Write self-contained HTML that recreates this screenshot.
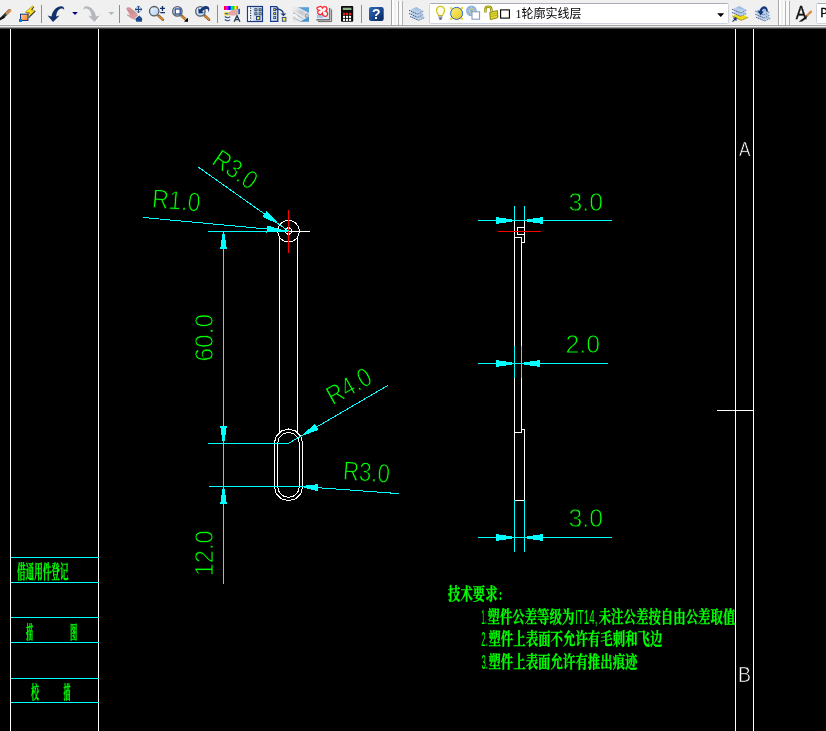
<!DOCTYPE html>
<html><head><meta charset="utf-8"><title>CAD</title>
<style>
html,body{margin:0;padding:0;background:#000;}
body{width:826px;height:731px;overflow:hidden;position:relative;font-family:"Liberation Sans","Noto Sans CJK SC",sans-serif;}
svg.cad{position:absolute;left:0;top:0;}
svg{filter:brightness(1);}
.dt{font-family:"Liberation Sans",sans-serif;fill:#00ff00;stroke:#000;stroke-width:0.8px;paint-order:fill stroke;}
.lt{font-family:"Liberation Sans",sans-serif;fill:#00ff00;}
.wt{font-family:"Liberation Sans",sans-serif;fill:#fff;stroke:#000;stroke-width:0.6px;paint-order:fill stroke;}
.cn{font-family:"Liberation Serif","Noto Serif CJK SC",serif;font-weight:bold;fill:#00ff00;stroke:#00ff00;stroke-width:0.3px;}
#tb{position:absolute;left:0;top:0;width:826px;height:29px;}
</style></head><body>
<svg class="cad" width="826" height="731" viewBox="0 0 826 731">
<g shape-rendering="crispEdges" stroke-width="1" fill="none">
<line x1="10.5" y1="28" x2="10.5" y2="731" stroke="#ffffff" />
<line x1="98.5" y1="28" x2="98.5" y2="731" stroke="#ffffff" />
<line x1="735.5" y1="28" x2="735.5" y2="731" stroke="#ffffff" />
<line x1="753.5" y1="28" x2="753.5" y2="731" stroke="#ffffff" />
<line x1="717" y1="410.5" x2="753" y2="410.5" stroke="#ffffff" />
<line x1="10.5" y1="557.5" x2="98.5" y2="557.5" stroke="#00ffff" />
<line x1="10.5" y1="582.5" x2="98.5" y2="582.5" stroke="#00ffff" />
<line x1="10.5" y1="617.5" x2="98.5" y2="617.5" stroke="#00ffff" />
<line x1="10.5" y1="642.5" x2="98.5" y2="642.5" stroke="#00ffff" />
<line x1="10.5" y1="678.5" x2="98.5" y2="678.5" stroke="#00ffff" />
<line x1="10.5" y1="702.5" x2="98.5" y2="702.5" stroke="#00ffff" />
<line x1="279.5" y1="237" x2="279.5" y2="432.5" stroke="#ffffff" />
<line x1="297.5" y1="237" x2="297.5" y2="432.5" stroke="#ffffff" />
<polygon fill="none" stroke="#fff" points="299.4,231.2 298.6,235.4 296.2,238.9 292.7,241.3 288.5,242.1 284.3,241.3 280.8,238.9 278.4,235.4 277.6,231.2 278.4,227.0 280.8,223.5 284.3,221.1 288.5,220.3 292.7,221.1 296.2,223.5 298.6,227.0"/>
<polygon fill="none" stroke="#fff" points="291.9,231.0 290.9,233.4 288.5,234.4 286.1,233.4 285.1,231.0 286.1,228.6 288.5,227.6 290.9,228.6"/>
<polygon fill="none" stroke="#fff" points="274.3,443.2 276.2,436.1 281.4,430.9 288.5,429.0 295.6,430.9 300.8,436.1 302.7,443.2 302.7,486.5 300.8,493.6 295.6,498.8 288.5,500.7 281.4,498.8 276.2,493.6 274.3,486.5"/>
<polygon fill="none" stroke="#fff" points="277.7,443.2 279.1,437.8 283.1,433.8 288.5,432.4 293.9,433.8 297.9,437.8 299.3,443.2 299.3,486.5 297.9,491.9 293.9,495.9 288.5,497.3 283.1,495.9 279.1,491.9 277.7,486.5"/>
<line x1="288.5" y1="231.5" x2="310" y2="231.5" stroke="#ffffff" />
<line x1="208" y1="231.5" x2="288.5" y2="231.5" stroke="#00ffff" />
<line x1="288.5" y1="210" x2="288.5" y2="253" stroke="#ff0000" />
<line x1="208" y1="443.5" x2="289" y2="443.5" stroke="#00ffff" />
<line x1="209" y1="486.5" x2="300" y2="486.5" stroke="#00ffff" />
<line x1="223.5" y1="231" x2="223.5" y2="584" stroke="#00ffff" />
<line x1="198.3" y1="167.1" x2="288.5" y2="231" stroke="#00ffff" />
<line x1="143.3" y1="217.5" x2="288.5" y2="231" stroke="#00ffff" />
<line x1="388.1" y1="385.3" x2="288.5" y2="443.4" stroke="#00ffff" />
<line x1="398.6" y1="493.6" x2="299.3" y2="486.3" stroke="#00ffff" />
<path stroke="#fff" d="M514.5 221V500.5H524.5V429.5H521.5 M524.5 221V242.5H521.5 M521.5 237.5V432.5H514.5 M514.5 237.5H521.5 M517.5 227.5H524.5V234.5H517.5Z"/>
<line x1="498" y1="231.5" x2="541" y2="231.5" stroke="#ff0000" />
<line x1="478" y1="220.5" x2="612" y2="220.5" stroke="#00ffff" />
<line x1="514.5" y1="206" x2="514.5" y2="221" stroke="#00ffff" />
<line x1="524.5" y1="206" x2="524.5" y2="221" stroke="#00ffff" />
<line x1="478" y1="363.5" x2="608" y2="363.5" stroke="#00ffff" />
<line x1="514.5" y1="346" x2="514.5" y2="378" stroke="#00ffff" />
<line x1="521.5" y1="346" x2="521.5" y2="378" stroke="#00ffff" />
<line x1="478" y1="537.5" x2="612" y2="537.5" stroke="#00ffff" />
<line x1="514.5" y1="500" x2="514.5" y2="552" stroke="#00ffff" />
<line x1="524.5" y1="500" x2="524.5" y2="552" stroke="#00ffff" />
</g>
<g shape-rendering="crispEdges">
<rect x="222" y="234" width="3" height="6" fill="#00ffff"/><rect x="221" y="240" width="5" height="7" fill="#00ffff"/><rect x="220" y="247" width="7" height="2" fill="#00ffff"/>
<rect x="222" y="435" width="3" height="6" fill="#00ffff"/><rect x="221" y="428" width="5" height="7" fill="#00ffff"/><rect x="220" y="426" width="7" height="2" fill="#00ffff"/>
<rect x="222" y="489" width="3" height="6" fill="#00ffff"/><rect x="221" y="495" width="5" height="7" fill="#00ffff"/><rect x="220" y="502" width="7" height="2" fill="#00ffff"/>
<polygon points="279.6,224.7 266.6,211.1 262.4,216.9" fill="#00ffff"/>
<polygon points="285.1,230.7 267.0,225.4 266.4,232.6" fill="#00ffff"/>
<polygon points="300.8,436.2 318.6,430.0 314.9,423.8" fill="#00ffff"/>
<polygon points="299.3,486.3 317.5,491.2 318.0,484.1" fill="#00ffff"/>
<rect x="506" y="219" width="6" height="3" fill="#00ffff"/><rect x="499" y="218" width="7" height="5" fill="#00ffff"/><rect x="496" y="217" width="3" height="7" fill="#00ffff"/>
<rect x="527" y="219" width="6" height="3" fill="#00ffff"/><rect x="533" y="218" width="7" height="5" fill="#00ffff"/><rect x="540" y="217" width="3" height="7" fill="#00ffff"/>
<rect x="506" y="362" width="6" height="3" fill="#00ffff"/><rect x="499" y="361" width="7" height="5" fill="#00ffff"/><rect x="496" y="360" width="3" height="7" fill="#00ffff"/>
<rect x="524" y="362" width="6" height="3" fill="#00ffff"/><rect x="530" y="361" width="7" height="5" fill="#00ffff"/><rect x="537" y="360" width="3" height="7" fill="#00ffff"/>
<rect x="506" y="536" width="6" height="3" fill="#00ffff"/><rect x="499" y="535" width="7" height="5" fill="#00ffff"/><rect x="496" y="534" width="3" height="7" fill="#00ffff"/>
<rect x="527" y="536" width="6" height="3" fill="#00ffff"/><rect x="533" y="535" width="7" height="5" fill="#00ffff"/><rect x="540" y="534" width="3" height="7" fill="#00ffff"/>
</g>
<text class="dt" transform="translate(210.5,163.3) rotate(34.6)" font-size="26.5" textLength="48" lengthAdjust="spacingAndGlyphs">R3.0</text>
<text class="dt" transform="translate(151.5,207.3) rotate(5)" font-size="26.5" textLength="48.5" lengthAdjust="spacingAndGlyphs">R1.0</text>
<text class="dt" transform="translate(213.4,361.5) rotate(-90)" font-size="26.5" textLength="47.5" lengthAdjust="spacingAndGlyphs">60.0</text>
<text class="dt" transform="translate(213.4,576.3) rotate(-90)" font-size="26.5" textLength="46" lengthAdjust="spacingAndGlyphs">12.0</text>
<text class="dt" transform="translate(332.5,405.5) rotate(-29)" font-size="26.5" textLength="47.5" lengthAdjust="spacingAndGlyphs">R4.0</text>
<text class="dt" transform="translate(342.5,479.5) rotate(4)" font-size="26.5" textLength="47" lengthAdjust="spacingAndGlyphs">R3.0</text>
<text class="dt" transform="translate(568.5,210.9) rotate(0)" font-size="26.5" textLength="34.5" lengthAdjust="spacingAndGlyphs">3.0</text>
<text class="dt" transform="translate(565.5,353) rotate(0)" font-size="26.5" textLength="34.5" lengthAdjust="spacingAndGlyphs">2.0</text>
<text class="dt" transform="translate(568.5,527.2) rotate(0)" font-size="26.5" textLength="34.5" lengthAdjust="spacingAndGlyphs">3.0</text>
<text class="wt" x="739" y="156" font-size="20.5" textLength="11.5" lengthAdjust="spacingAndGlyphs">A</text>
<text class="wt" x="738" y="682" font-size="22.5" textLength="13" lengthAdjust="spacingAndGlyphs">B</text>
<text class="cn" x="17" y="578.7" font-size="19.3" textLength="51.5" lengthAdjust="spacingAndGlyphs">借通用件登记</text>
<text class="cn" x="26" y="638.5" font-size="18.5" textLength="7" lengthAdjust="spacingAndGlyphs">描</text>
<text class="cn" x="70" y="638.5" font-size="18.5" textLength="7.3" lengthAdjust="spacingAndGlyphs">图</text>
<text class="cn" x="31" y="699" font-size="18.5" textLength="8" lengthAdjust="spacingAndGlyphs">校</text>
<text class="cn" x="63.5" y="699" font-size="18.5" textLength="7" lengthAdjust="spacingAndGlyphs">描</text>
<text class="cn" x="448" y="600" font-size="16.5" textLength="49.5" lengthAdjust="spacingAndGlyphs">技术要求</text>
<text class="cn" x="499" y="600" font-size="16.5" textLength="3" lengthAdjust="spacingAndGlyphs">:</text>
<text class="lt" x="481.3" y="623.5" font-size="19.5" textLength="5.5" lengthAdjust="spacingAndGlyphs">1.</text>
<text class="cn" x="487.5" y="622.5" font-size="16.5" textLength="86.79" lengthAdjust="spacingAndGlyphs">塑件公差等级为</text>
<text class="lt" x="575" y="623.5" font-size="19.5" textLength="22.5" lengthAdjust="spacingAndGlyphs">IT14,</text>
<text class="cn" x="598.7" y="622.5" font-size="16.5" textLength="136.67000000000002" lengthAdjust="spacingAndGlyphs">未注公差按自由公差取值</text>
<text class="lt" x="481.3" y="646" font-size="19.5" textLength="6.5" lengthAdjust="spacingAndGlyphs">2.</text>
<text class="cn" x="488.4" y="645" font-size="16.5" textLength="174.08" lengthAdjust="spacingAndGlyphs">塑件上表面不允许有毛刺和飞边</text>
<text class="lt" x="481.5" y="669" font-size="19.5" textLength="6.5" lengthAdjust="spacingAndGlyphs">3.</text>
<text class="cn" x="488.4" y="668" font-size="16.5" textLength="149.14000000000001" lengthAdjust="spacingAndGlyphs">塑件上表面允许有推出痕迹</text>
</svg>
<svg id="tb" width="826" height="29" viewBox="0 0 826 29">
<defs>
<linearGradient id="gOr" x1="0" y1="0" x2="1" y2="1"><stop offset="0" stop-color="#ffd0a8"/><stop offset="1" stop-color="#ff7a1a"/></linearGradient>
<linearGradient id="gLens" x1="0" y1="0" x2="1" y2="1"><stop offset="0" stop-color="#f4f9ff"/><stop offset="1" stop-color="#a9cdee"/></linearGradient>
<linearGradient id="gHelp" x1="0" y1="0" x2="1" y2="1"><stop offset="0" stop-color="#2f6cc0"/><stop offset="1" stop-color="#08245a"/></linearGradient>
<linearGradient id="gSheet" x1="0" y1="0" x2="1" y2="0"><stop offset="0" stop-color="#ffffff"/><stop offset="1" stop-color="#7fa9db"/></linearGradient>
<linearGradient id="gSh2" x1="0" y1="1" x2="0.6" y2="0"><stop offset="0" stop-color="#e4eefa"/><stop offset="1" stop-color="#8fb2dc"/></linearGradient>
<linearGradient id="gSun" x1="0" y1="0" x2="1" y2="1"><stop offset="0" stop-color="#fbf07a"/><stop offset="1" stop-color="#e6c81e"/></linearGradient>
<linearGradient id="gRain" x1="0" y1="0" x2="1" y2="0"><stop offset="0" stop-color="#ff0000"/><stop offset="0.2" stop-color="#ff00ff"/><stop offset="0.4" stop-color="#0000ff"/><stop offset="0.55" stop-color="#00e0e0"/><stop offset="0.68" stop-color="#00e000"/><stop offset="0.82" stop-color="#ffff00"/><stop offset="1" stop-color="#ff3000"/></linearGradient>
<linearGradient id="gRoll" x1="0" y1="0" x2="1" y2="1"><stop offset="0" stop-color="#f4f4f4"/><stop offset="0.5" stop-color="#c4c8cc"/><stop offset="1" stop-color="#e8ecf0"/></linearGradient>
<g id="lens"><circle r="4.7" fill="url(#gLens)" stroke="#555b66" stroke-width="1.3"/></g>
<g id="handle"><line x1="0" y1="0" x2="4.2" y2="3.8" stroke="#7a4a18" stroke-width="2.6" stroke-linecap="round"/><line x1="0.2" y1="0.2" x2="4" y2="3.6" stroke="#e09038" stroke-width="1.5" stroke-linecap="round"/></g>
<g id="sheet"><polygon points="0,-3.2 7.4,0 0,3.2 -7.4,0" /></g>
<g id="sh2"><polygon points="-7.4,0 -0.3,-3.3 7.3,0.9 1.1,3.6" stroke="none"/><path d="M-7.4 0 L1.1 3.6" stroke="#2c4470" stroke-width="1" stroke-dasharray="1.3 0.9" fill="none"/><path d="M1.1 3.6 L7.3 0.9" stroke="#5c7698" stroke-width="0.9" stroke-dasharray="1.3 0.9" fill="none"/></g>
</defs>
<!-- background -->
<rect x="0" y="0" width="826" height="29" fill="#f0f0f0"/>
<rect x="0" y="24" width="826" height="1" fill="#f8f8f8"/>
<rect x="0" y="25" width="826" height="1" fill="#a6a6a6"/>
<rect x="0" y="26" width="826" height="1" fill="#ececec"/>
<rect x="0" y="27" width="826" height="1" fill="#9c9c9c"/>
<rect x="0" y="28" width="826" height="1" fill="#444"/>
<!-- toolbar ends & grippers -->
<rect x="392" y="0" width="2" height="25" fill="#ffffff"/><rect x="396" y="1" width="2" height="24" fill="#fcfcfc"/>
<rect x="391" y="0" width="1" height="26" fill="#a8a8a8"/>
<rect x="398" y="1" width="1" height="24" fill="#b0b0b0"/><rect x="399" y="1" width="3" height="24" fill="#fafafa"/><rect x="402" y="1" width="1" height="24" fill="#b0b0b0"/>
<rect x="779" y="0" width="2" height="25" fill="#ffffff"/><rect x="783" y="1" width="2" height="24" fill="#fcfcfc"/>
<rect x="778" y="0" width="1" height="26" fill="#a8a8a8"/>
<rect x="785" y="1" width="1" height="24" fill="#b0b0b0"/><rect x="786" y="1" width="3" height="24" fill="#fafafa"/><rect x="789" y="1" width="1" height="24" fill="#b0b0b0"/>
<!-- separators -->
<g fill="#8e8e8e"><rect x="41" y="5" width="1" height="18"/><rect x="119" y="5" width="1" height="18"/><rect x="217" y="5" width="1" height="18"/><rect x="361" y="5" width="1" height="18"/></g>
<!-- brush (partial) -->
<g>
<line x1="3" y1="17" x2="9.5" y2="10.5" stroke="#2a3a3a" stroke-width="3" stroke-linecap="round"/>
<line x1="7" y1="13.5" x2="10" y2="10.5" stroke="#d89058" stroke-width="2.6" stroke-linecap="round"/>
<path d="M-1 18.5 L3.5 15.5 L5 17.5 L0 20.5Z" fill="#111"/>
</g>
<!-- block editor -->
<g>
<path d="M33.2 6.8 L26 13 L30.2 13.4 L28.6 18.6 L35.8 11.2 L31.8 10.8 L34.2 7Z" fill="#222"/><path d="M32.4 6 L25.2 12.2 L29.4 12.8 L27.6 18 L35 10.6 L31 10 L33.6 6.4Z" fill="#ffe11e" stroke="#8a7a10" stroke-width="0.5" stroke-linejoin="round"/>
<rect x="20.5" y="14.2" width="7.5" height="6.3" fill="url(#gOr)" stroke="#153a7a" stroke-width="1"/>
<rect x="19" y="19" width="3" height="3" fill="#0a78e8"/>
</g>
<!-- undo -->
<path d="M53 22 L47.6 15.6 L51.6 16.4 C52.2 11.5 55.5 6.6 61.5 6.2 C63.2 6.2 64.4 7.6 64.2 10.2 C63.4 8.6 62.2 8.4 61 8.6 C57.8 9.6 56.4 13 56.2 16.6 L59.6 15.6 Z" fill="#14306a"/>
<polygon points="72.2,12 77.8,12 75,15" fill="#000080"/>
<!-- redo (disabled) -->
<path d="M94.5 22 L99.9 15.6 L95.9 16.4 C95.3 11.5 92 6.6 86 6.2 C84.3 6.2 83.4 7.6 83.6 10.2 C84.4 8.6 85.6 8.4 86.8 8.6 C90 9.6 91.4 13 91.6 16.6 L88.2 15.6 Z" fill="#b4b7bd"/>
<path d="M95 22.6 L100.4 16.2" stroke="#fff" stroke-width="0.8" fill="none"/>
<polygon points="108.4,12 114.2,12 111.3,15" fill="#b4b4c4"/>
<!-- pan -->
<g>
<path d="M126.2 8.8 C126.8 7.2 128.6 7 130 7.6 L136.4 12.6 L138.4 16 L135 19.8 L131.5 18.6 L127.2 15.6 C126.6 14.8 127.2 14 128.2 14.4 L130 15.2 Z" fill="#d79a9c"/>
<path d="M127.5 9.5 L133 14.2 M129.3 8.2 L134.6 12.8" stroke="#b77478" stroke-width="0.7" fill="none"/>
<polygon points="135.1,18.5 139.4,15.4 142.2,18.6 141.9,21.8 136.4,21.8" fill="#1c4c8e"/>
<path d="M134.6 19 L138.6 15.2" stroke="#fff" stroke-width="0.9"/>
<path d="M138.5 6.2 V12.6 M135.3 9.4 H141.7" stroke="#1c4884" stroke-width="1.1"/>
<path d="M137.2 7.3 L138.5 5.9 L139.8 7.3 M137.2 11.5 L138.5 12.9 L139.8 11.5 M136.4 8.1 L135 9.4 L136.4 10.7 M140.6 8.1 L142 9.4 L140.6 10.7" stroke="#1c4884" stroke-width="0.9" fill="none"/>
</g>
<!-- zoom realtime -->
<use href="#handle" x="158.6" y="15.8"/><use href="#lens" x="154.2" y="11.2"/>
<path d="M160 8.4 H165 M162.5 5.9 V10.9 M160.3 12.6 H165" stroke="#14306a" stroke-width="1.3"/>
<!-- zoom window -->
<use href="#handle" x="181.6" y="15.8" /><use href="#lens" x="177.4" y="11.4"/>
<rect x="175.2" y="9" width="5" height="5" fill="#fff" stroke="#1c3f88" stroke-width="1.2"/>
<polygon points="184,21.8 188,17.8 188,21.8" fill="#000"/>
<!-- zoom previous -->
<use href="#handle" x="204.8" y="15.8"/><use href="#lens" x="200.4" y="11.4"/>
<path d="M198.2 8.2 L198.6 13.4 L203.8 13 L202.2 11.4 C203.6 9.6 205.6 8.6 207.6 9.2 C208.4 9.8 208.4 11.2 207.8 12.6 C209.6 11 210 8.2 208.2 6.6 C205.4 5 202 6.6 200 9.6 Z" fill="#14387a"/>
<!-- properties -->
<g>
<rect x="224" y="6" width="14" height="4" fill="url(#gRain)"/>
<rect x="238.2" y="8.8" width="1.8" height="5.4" fill="#2a5ea8"/>
<rect x="224" y="12" width="6.4" height="3.4" rx="1" fill="#e4dc58"/>
<path d="M225 13.6 H229.6" stroke="#3a5a98" stroke-width="1.2"/>
<path d="M227.4 13.4 L232 10 L237.6 8.6 L238 13.4 L234.6 15.6 L230.8 15.4 L229.6 14.4 Z" fill="#e3a6a4"/>
<path d="M224.8 16.6 C226.4 17.8 228.8 17.8 230.2 16.6 M224.8 19.6 C226.4 20.8 228.8 20.8 230.2 19.6" stroke="#2c5590" stroke-width="1.2" fill="none"/>
<path d="M234.2 21.8 L237 15.6 L239.9 21.8 M235.3 19.6 H238.8" stroke="#2b3d58" stroke-width="1.4" fill="none"/>
</g>
<!-- design center -->
<g>
<rect x="247.5" y="6.5" width="15" height="15" fill="#d3deee" stroke="#1a3a86" stroke-width="1.2"/>
<rect x="248.3" y="7.2" width="4.2" height="13.6" fill="#fff"/>
<path d="M250.6 7.6 V20.6" stroke="#1a2a66" stroke-width="1.3" stroke-dasharray="1.2 1.3"/>
<path d="M251.3 8.2 V20.6" stroke="#f0d820" stroke-width="0.9" stroke-dasharray="1.2 1.3"/>
<g fill="#23407c"><rect x="254.4" y="8.3" width="3" height="3"/><rect x="258.6" y="8.3" width="3" height="3"/><rect x="254.4" y="12.3" width="3" height="3"/><rect x="258.6" y="12.3" width="3" height="3"/><rect x="256" y="16" width="4.4" height="4.2"/></g>
<g fill="#e6e04a"><rect x="255.3" y="9.1" width="1.3" height="1.3"/><rect x="259.5" y="9.1" width="1.3" height="1.3" fill="#9fd07a"/><rect x="255.3" y="13.1" width="1.3" height="1.3" fill="#9fe0c0"/><rect x="259.5" y="13.1" width="1.3" height="1.3"/><rect x="257" y="17" width="2.4" height="2.3" fill="#f4e64c"/></g>
</g>
<!-- tool palettes -->
<g>
<path d="M270.7 6.6 H276.6 L277.8 8 V21.3 H270.7 Z" fill="#cfdcf0" stroke="#17388a" stroke-width="1.3"/>
<rect x="271.4" y="7.2" width="1.3" height="13.4" fill="#e8eef8"/>
<g fill="#23407c"><rect x="273.3" y="8.2" width="2.8" height="2.8"/><rect x="273.3" y="12.2" width="2.8" height="2.8"/><rect x="273.3" y="16.2" width="2.8" height="2.8"/></g>
<g><rect x="274.1" y="9" width="1.2" height="1.2" fill="#d8e45a"/><rect x="274.1" y="13" width="1.2" height="1.2" fill="#f0e040"/><rect x="274.1" y="17" width="1.2" height="1.2" fill="#a0f0d0"/></g>
<path d="M276 9.4 C280 8.6 283 10.6 283.4 13.6" stroke="#1a3a7a" stroke-width="1.3" fill="none"/>
<polygon points="280.4,13.4 286.4,13.4 283.4,16.2" fill="#1a3a7a"/>
<rect x="282.3" y="17.4" width="3.6" height="3.8" fill="#f6ea50" stroke="#23407c" stroke-width="0.9"/>
</g>
<!-- sheet set -->
<g>
<rect x="293" y="7.2" width="16" height="14.6" fill="#e4e8ec"/>
<polygon points="298,7.2 309,7.2 309,13" fill="#5aa0d6"/>
<polygon points="309,16.5 309,21.8 300,21.8" fill="#4a94cc"/>
<path d="M293.5 9.5 L297.5 7.6 L308 14.6 L306 18.2 Z" fill="url(#gRoll)"/>
<ellipse cx="306.8" cy="15.6" rx="1.9" ry="2.4" fill="#9aa0a6" transform="rotate(25 306.8 15.6)"/>
<ellipse cx="306.9" cy="15.7" rx="0.9" ry="1.2" fill="#d4d8dc" transform="rotate(25 306.9 15.7)"/>
<path d="M293 12.5 L303.5 19 M293 17.6 L301 21.6" stroke="#b4b8bc" stroke-width="1"/>
<path d="M293.4 15.6 L296 14.6 L297 17.6" stroke="#fff" stroke-width="1" fill="none"/>
</g>
<!-- markup set -->
<g>
<path d="M318 21.6 H331.6 V9.4" stroke="#6a6a6a" stroke-width="1" fill="none"/>
<rect x="316.4" y="7" width="13.4" height="13" fill="#dce6f4"/>
<path d="M316.4 19.9 H329.8 V8" stroke="#555" stroke-width="1.1" fill="none"/>
<rect x="317" y="15" width="6" height="3" fill="#a8c4e4"/>
<path d="M319.2 6.8 C320.6 6 322 6.6 322.4 8 C323.4 6.4 325.8 6.2 326.6 7.8 C327.4 9.4 326.4 10.6 325.4 11.2 C327.2 11.6 328.2 13.4 327.4 15 C326.6 16.6 324.4 16.8 323.2 15.4 C322.6 14.6 322.4 14 322.4 13.4 C321.6 14.8 319.4 15 318.2 13.8 C317.2 12.6 317.8 11 319 10.4 C317.4 10 316.6 8.6 317.2 7.6 C317.6 7 318.4 6.8 319.2 6.8 Z" fill="#f4f8fc" stroke="#ff2626" stroke-width="1.3"/>
</g>
<!-- calculator -->
<g>
<rect x="341" y="6" width="12.2" height="15.8" rx="0.8" fill="#0a0a0a"/>
<rect x="342.8" y="7.7" width="8.6" height="2.3" fill="#8fb48c"/>
<g fill="#ff1a1a"><rect x="343" y="12.8" width="2.1" height="2.1"/><rect x="346" y="12.8" width="2.1" height="2.1"/><rect x="349" y="12.8" width="2.1" height="2.1"/></g>
<g fill="#fff"><rect x="343" y="15.8" width="2.1" height="2.1"/><rect x="346" y="15.8" width="2.1" height="2.1"/><rect x="349" y="15.8" width="2.1" height="2.1"/><rect x="343" y="18.8" width="2.1" height="2.1"/><rect x="346" y="18.8" width="2.1" height="2.1"/><rect x="349" y="18.8" width="2.1" height="2.1"/></g>
</g>
<!-- help -->
<rect x="369" y="6.9" width="14.7" height="14" rx="2.2" fill="url(#gHelp)"/>
<text x="376.3" y="19.2" text-anchor="middle" font-family="Liberation Sans, sans-serif" font-weight="bold" font-size="14" fill="#ffffff">?</text>
<!-- layer props -->
<g>
<use href="#sh2" x="417.6" y="16.7" fill="url(#gSh2)"/>
<use href="#sh2" x="416.5" y="13.6" fill="url(#gSh2)"/>
<use href="#sh2" x="416.5" y="10.4" fill="url(#gSh2)"/>
</g>
<!-- layer combo -->
<rect x="429.5" y="3.5" width="299" height="20" rx="1.2" fill="#fff" stroke="#d0d4de" stroke-width="1"/><path d="M430.5 3.5 H727.5" stroke="#a9adb6" stroke-width="1"/>
<!-- bulb -->
<g>
<path d="M438.6 15.6 C438.4 14 436.6 13 436.6 10.4 C436.6 8 438.4 6.4 440.5 6.4 C442.6 6.4 444.4 8 444.4 10.4 C444.4 13 442.6 14 442.4 15.6 Z" fill="#fffde8" stroke="#d6c41c" stroke-width="1.3"/>
<rect x="438.7" y="15.6" width="3.6" height="2.6" fill="#7a86a8"/><rect x="439.3" y="18.2" width="2.4" height="1.4" fill="#2a3468"/>
<path d="M438.8 16.8 H442.2" stroke="#dfe4f0" stroke-width="0.7"/>
</g>
<!-- sun -->
<g>
<path d="M450.4 7.2 L462.8 19.6 M462.8 7.2 L450.4 19.6" stroke="#f2dc38" stroke-width="2.2"/>
<circle cx="456.6" cy="13.4" r="6" fill="url(#gSun)" stroke="#1f66d0" stroke-width="1"/>
</g>
<!-- freeze in viewport -->
<g>
<circle cx="471.4" cy="10.9" r="5.4" fill="#8cb2e2"/>
<g stroke="#e2d27a" stroke-width="1" fill="none"><circle cx="471.4" cy="10.9" r="2.1"/><path d="M471.4 6.6 V8 M471.4 13.8 V15.2 M467.1 10.9 H468.5 M474.3 10.9 H475.7 M468.4 7.9 L469.4 8.9 M473.4 12.9 L474.4 13.9 M468.4 13.9 L469.4 12.9 M473.4 8.9 L474.4 7.9"/></g>
<rect x="472" y="11.8" width="7.6" height="7.4" fill="#fff" stroke="#7f96b8" stroke-width="1"/>
</g>
<!-- lock -->
<g>
<path d="M485.4 12.6 V9.6 C485.4 5.6 491.4 5.6 491.4 9.6 V11.4" fill="none" stroke="#8a8600" stroke-width="2.4"/>
<path d="M485.4 12.6 V9.6 C485.4 5.6 491.4 5.6 491.4 9.6 V11.4" fill="none" stroke="#e8e030" stroke-width="1"/>
<path d="M489.8 12.4 L497.4 10.6 L497.8 17.6 L490.4 19.6 Z" fill="#e4dc34" stroke="#8a8600" stroke-width="1"/>
<path d="M490.4 14.6 L497.4 13 M490.6 16.6 L497.6 15" stroke="#a8a410" stroke-width="0.8"/>
</g>
<!-- color swatch -->
<rect x="500.6" y="9.9" width="8.8" height="8.2" fill="#fff" stroke="#000" stroke-width="1.1"/>
<text x="515.5" y="18.3" font-family="Liberation Serif, Noto Sans CJK SC, sans-serif" font-size="12" fill="#000">1轮廓实线层</text>
<polygon points="717.2,13.2 724.2,13.2 720.7,17" fill="#000"/>
<!-- layer make current -->
<g>
<g transform="translate(740.2 16.4)"><polygon points="-7.8,-0.4 -0.3,-3.3 7.8,0.9 1.1,3.9" fill="#f2da14"/><path d="M-7.8 -0.4 L1.1 3.9 L7.8 0.9" stroke="#b09a08" stroke-width="1" fill="none"/></g>
<use href="#sh2" x="739.6" y="12.6" fill="url(#gSh2)"/>
<use href="#sh2" x="739.6" y="9.3" fill="url(#gSh2)"/>
<path d="M732.6 21.6 L735.5 18.7 M733.4 18.2 H736 V20.8" stroke="#14306a" stroke-width="1.2" fill="none"/>
</g>
<!-- layer previous -->
<g>
<use href="#sh2" x="763.6" y="17.3" fill="url(#gSh2)"/>
<use href="#sh2" x="762.8" y="14.3" fill="url(#gSh2)"/>
<use href="#sh2" x="762.8" y="11.2" fill="url(#gSh2)"/>
<path d="M767.8 11.6 C768.2 8 765.6 5.8 763.4 6.4 C761.4 6.8 760 8.8 759.6 11 L757.6 10.6 L760.6 15.6 L763.8 11.6 L761.8 11.3 C762.2 9.6 763 8.7 764.2 8.7 C765.6 8.7 766.4 9.9 766.2 11.6 Z" fill="#14387a"/>
</g>
<!-- text style -->
<g>
<text x="795.8" y="19" font-family="Liberation Sans, sans-serif" font-size="17.5" fill="#111" stroke="#111" stroke-width="0.35" textLength="10.6" lengthAdjust="spacingAndGlyphs">A</text>
<line x1="811" y1="11.6" x2="806.6" y2="16" stroke="#d88a48" stroke-width="2.2" stroke-linecap="round"/>
<line x1="806.8" y1="15.8" x2="804.4" y2="18.2" stroke="#3a4a4a" stroke-width="2.2"/>
<path d="M805.6 16.6 L798.6 21.8 L802 21.4 L806.8 18 Z" fill="#111"/>
</g>
<!-- style combo -->
<rect x="816.5" y="3.5" width="20" height="20" rx="1.2" fill="#fff" stroke="#d0d4de" stroke-width="1"/><path d="M817.5 3.5 H827" stroke="#a9adb6" stroke-width="1"/>
<text x="820.3" y="17" font-family="Liberation Mono, monospace" font-size="13" fill="#000" stroke="#000" stroke-width="0.3">P</text>
</svg>

</body></html>
